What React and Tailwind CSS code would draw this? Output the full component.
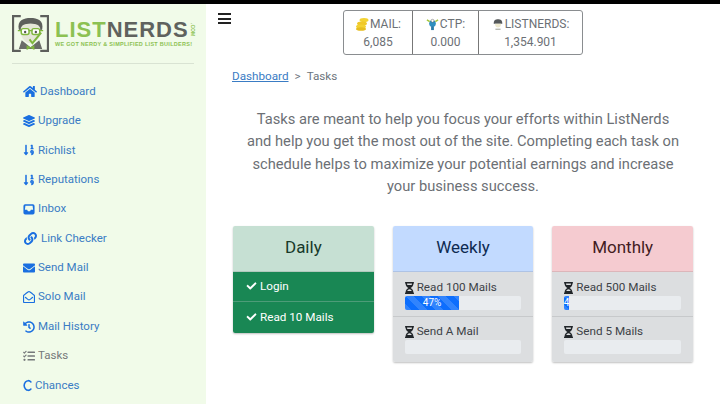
import React from "react";
import {
  FaHome, FaLayerGroup, FaSortNumericDown, FaLink, FaEnvelope, FaRegEnvelopeOpen,
  FaHistory, FaTasks, FaCheck, FaHourglassHalf,
} from "react-icons/fa";

const CIcon = ({ className }) => (
  <svg viewBox="0 0 10 13" className={className} fill="none" stroke="currentColor" strokeWidth="1.7">
    <path d="M8.8 2.600A4.300 5.400 0 1 0 8.800 10.400" strokeLinecap="round" />
  </svg>
);

const InboxIcon = ({ className }) => (
  <svg viewBox="0 0 14 14" className={className} fill="currentColor">
    <path
      fillRule="evenodd"
      d="M2.500 1.500h9a2 2 0 0 1 2 2v8a2 2 0 0 1-2 2h-9a2 2 0 0 1-2-2v-8a2 2 0 0 1 2-2zM2.800 3.300 2.200 8h2.600l1 1.500h2.400l1-1.500h2.600l-.6-4.700z"
    />
  </svg>
);

const nav = [
  { label: "Dashboard", Icon: FaHome, icon: "w-[14px] h-[13px]" },
  { label: "Upgrade", Icon: FaLayerGroup, icon: "w-[12px] h-[12px]" },
  { label: "Richlist", Icon: FaSortNumericDown, icon: "w-[12px] h-[12px]" },
  { label: "Reputations", Icon: FaSortNumericDown, icon: "w-[12px] h-[12px]" },
  { label: "Inbox", Icon: InboxIcon, icon: "w-[12px] h-[12px]" },
  { label: "Link Checker", Icon: FaLink, icon: "w-[15px] h-[13px]" },
  { label: "Send Mail", Icon: FaEnvelope, icon: "w-[12px] h-[12px]" },
  { label: "Solo Mail", Icon: FaRegEnvelopeOpen, icon: "w-[12px] h-[12px]" },
  { label: "Mail History", Icon: FaHistory, icon: "w-[12px] h-[12px]" },
  { label: "Tasks", Icon: FaTasks, icon: "w-[12px] h-[12px]", muted: true },
  { label: "Chances", Icon: CIcon, icon: "w-[9px] h-[13px]" },
];

const Logo = () => (
  <div className="flex items-center h-[40px] ml-[12px]">
    <svg viewBox="0 0 38 38" className="w-[37px] h-[37px] shrink-0">
      <path d="M9 1H1v36h8M29 1h8v36h-8" fill="none" stroke="#5d5f5c" strokeWidth="2.400" />
      <path d="M7 15C5 5 12 3 19 3s14 2 12 12l-2 1c-1-4-4-7-10-7s-9 3-10 7z" fill="#5d5f5c" />
      <path d="M9 14c1-4 4-5 10-5s9 1 10 5v6c-2 6-6 9-10 9s-8-3-10-9z" fill="#e4e6d8" />
      <rect x="9.500" y="14" width="8" height="6" rx="2" fill="#fff" stroke="#7fb63d" strokeWidth="1.500" />
      <rect x="20.500" y="14" width="8" height="6" rx="2" fill="#fff" stroke="#7fb63d" strokeWidth="1.500" />
      <path d="M6 16h4M17 16h4M28 16h4" stroke="#7fb63d" strokeWidth="1.400" />
      <circle cx="13.500" cy="17.500" r="1.200" fill="#555" />
      <circle cx="24.500" cy="17.500" r="1.200" fill="#555" />
      <path d="M10 26l9 7 9-7 3 9H7z" fill="#6a6c68" />
      <path d="M15 31l4 2 4-2v5l-4-2-4 2z" fill="#7fb63d" />
      <path d="M18 25l3 4 9-11" fill="none" stroke="#7fb63d" strokeWidth="2" />
    </svg>
    <div className="ml-[6px] w-[140px] flex flex-col font-['Liberation_Sans',sans-serif]">
      <div className="flex items-center h-[20px] mt-[1px]">
        <span className="text-[22px] leading-[20px] font-bold text-[#8cc152] tracking-[1px]">LIST</span>
        <span className="text-[22px] leading-[20px] font-bold text-[#5f625e] tracking-[1px]">NERDS</span>
        <span className="text-[5px] leading-[6px] text-[#8cc152] font-bold [writing-mode:vertical-rl] ml-[1px]">.COM</span>
      </div>
      <div className="mt-[1px] text-[5.500px] leading-[6px] font-bold text-[#8cc152] tracking-[0.29px] whitespace-nowrap">
        WE GOT NERDY &amp; SIMPLIFIED LIST BUILDERS!
      </div>
    </div>
  </div>
);

const Sidebar = () => (
  <aside className="w-[206px] shrink-0 h-[400px] overflow-hidden bg-[#f1fbe9]">
    <div className="pt-[9px]">
      <Logo />
      <div className="mx-[12px] mt-[10px] w-[182px] border-t border-[#d9e3d3]" />
    </div>
    <nav className="mt-[12.700px] ml-[23px] flex flex-col">
      {nav.map(({ label, Icon, icon, muted }) => (
        <a key={label} className={`flex items-center h-[29.400px] text-[11.500px] gap-[3px] ${muted ? "text-[#75787a]" : "text-[#3a7cc4]"}`}>
          <Icon className={`${icon} shrink-0 ${muted ? "text-[#75787a]" : "text-[#1a6fe0]"}`} />
          <span>{label}</span>
        </a>
      ))}
    </nav>
  </aside>
);

const Stat = ({ icon, label, value, w }) => (
  <div className={`${w} flex flex-col items-center pt-[4px] border-r last:border-r-0 border-[#777] h-full`}>
    <div className="flex items-center gap-[1px] text-[12px] leading-[18px] text-[#6c7075]">{icon}<span>{label}</span></div>
    <div className="text-[12px] leading-[18px] text-[#6c7075]">{value}</div>
  </div>
);

const Coins = () => (
  <svg viewBox="0 0 14 14" className="w-[14px] h-[14px]">
    <ellipse cx="9" cy="3" rx="4.500" ry="2" fill="#f3d232" />
    <ellipse cx="7" cy="6.500" rx="5" ry="2" fill="#f0c829" />
    <ellipse cx="6" cy="9.500" rx="5" ry="2" fill="#f3d232" />
    <ellipse cx="6" cy="12" rx="5" ry="1.800" fill="#e6bd20" />
  </svg>
);
const Bulb = () => (
  <svg viewBox="0 0 14 14" className="w-[13px] h-[13px]">
    <circle cx="7" cy="6" r="3.600" fill="#2f8fc0" />
    <rect x="5.500" y="9" width="3" height="4" fill="#2a7aa8" />
    <path d="M1 2l3 2M13 2l-3 2" stroke="#a4c53c" strokeWidth="1.600" />
    <circle cx="7" cy="3" r="1.600" fill="#fff" stroke="#555" strokeWidth=".5" />
  </svg>
);
const Nerd = () => (
  <svg viewBox="0 0 14 14" className="w-[12px] h-[13px]">
    <path d="M2 6c0-4 2-5 5-5s5 1 5 5z" fill="#55585a" />
    <path d="M3.500 6h7c0 3-1.500 4.500-3.500 4.500S3.500 9 3.500 6z" fill="#eee9cf" />
    <path d="M4 12.500h6" stroke="#8a8d80" strokeWidth="1" />
  </svg>
);

const Head = ({ title, cls }) => (
  <div className={`h-[46px] flex items-center justify-center text-[17px] border-b border-black/10 ${cls}`}>{title}</div>
);

const Bar = ({ label, barW }) => (
  <div className="h-[14.500px] rounded-[2px] bg-[#e9ecef] overflow-hidden flex">
    {barW ? (
      <div
        className={`${barW} h-full flex items-center justify-center text-[10px] text-white bg-[#0d6efd] bg-[linear-gradient(45deg,rgba(255,255,255,.15)_25%,transparent_25%,transparent_50%,rgba(255,255,255,.15)_50%,rgba(255,255,255,.15)_75%,transparent_75%,transparent)] bg-[length:16px_16px] overflow-hidden`}
      >
        {label}
      </div>
    ) : null}
  </div>
);

const Item = ({ text, children, last }) => (
  <div className={`px-[12px] h-[45px] ${last ? "pt-[7px]" : "pt-[8px] border-b border-[#c7c9cb]"}`}>
    <div className="flex items-center gap-[3px] h-[16px] text-[11.700px] text-[#3d4247]">
      <FaHourglassHalf className="w-[9px] h-[12px] text-[#212529]" />
      <span>{text}</span>
    </div>
    {children}
  </div>
);

const Card = ({ title, headCls, children }) => (
  <div className="self-start rounded-[2px] overflow-hidden shadow-[0_1px_2px_rgba(0,0,0,.25)]">
    <Head title={title} cls={headCls} />
    {children}
  </div>
);

const Done = ({ text, border }) => (
  <div className={`h-[30.500px] pl-[13px] flex items-center gap-[3px] text-[11.700px] text-white ${border ? "border-b border-[#4d9c78]" : ""}`}>
    <FaCheck className="w-[11px] h-[10px]" />
    <span>{text}</span>
  </div>
);

export default function App() {
  return (
    <div className="w-[720px] h-[404px] overflow-hidden bg-white font-['Roboto',sans-serif]">
      <div className="h-[4px] bg-black" />
      <div className="flex">
        <Sidebar />
        <main className="flex-1 min-w-0 px-[27px]">
          <div className="flex h-[51px] pt-[6px] -ml-[15px]">
            <div className="w-[125px] pt-[1px]">
              <div className="w-[13px] flex flex-col gap-[2.500px] mt-[2px]">
                <span className="h-[2px] bg-[#222]" />
                <span className="h-[2px] bg-[#222]" />
                <span className="h-[2px] bg-[#222]" />
              </div>
            </div>
            <div className="flex h-[45px] border border-[#8a8d90] rounded-[3px]">
              <Stat w="w-[69px]" icon={<Coins />} label="MAIL:" value="6,085" />
              <Stat w="w-[66px]" icon={<Bulb />} label="CTP:" value="0.000" />
              <Stat w="w-[103px]" icon={<Nerd />} label="LISTNERDS:" value="1,354.901" />
            </div>
          </div>
          <div className="mt-[14px] -ml-[1px] flex items-center h-[16px] text-[11.700px] text-[#6c757d]">
            <a className="text-[#3a7cc4] underline">Dashboard</a>
            <span className="mx-[6px]">&gt;</span>
            <span>Tasks</span>
          </div>
          <p className="mt-[23px] text-center text-[14.700px] leading-[22.300px] text-[#6c7075] mx-[12px]">
            Tasks are meant to help you focus your efforts within ListNerds and help you get the most out of the site. Completing each task on schedule helps to maximize your potential earnings and increase your business success.
          </p>
          <div className="mt-[28.500px] grid grid-cols-3 gap-x-[19px]">
            <Card title="Daily" headCls="bg-[#c6e0d3] text-[#17392a]">
              <div className="bg-[#198754]">
                <Done text="Login" border />
                <Done text="Read 10 Mails" />
              </div>
            </Card>
            <Card title="Weekly" headCls="bg-[#c2daff] text-[#0e2a52]">
              <div className="bg-[#dcdee0]">
                <Item text="Read 100 Mails"><Bar barW="w-[47%]" label="47%" /></Item>
                <Item text="Send A Mail" last><Bar /></Item>
              </div>
            </Card>
            <Card title="Monthly" headCls="bg-[#f5cbd0] text-[#431c22]">
              <div className="bg-[#dcdee0]">
                <Item text="Read 500 Mails"><Bar barW="w-[4%]" label="4" /></Item>
                <Item text="Send 5 Mails" last><Bar /></Item>
              </div>
            </Card>
          </div>
        </main>
      </div>
    </div>
  );
}
